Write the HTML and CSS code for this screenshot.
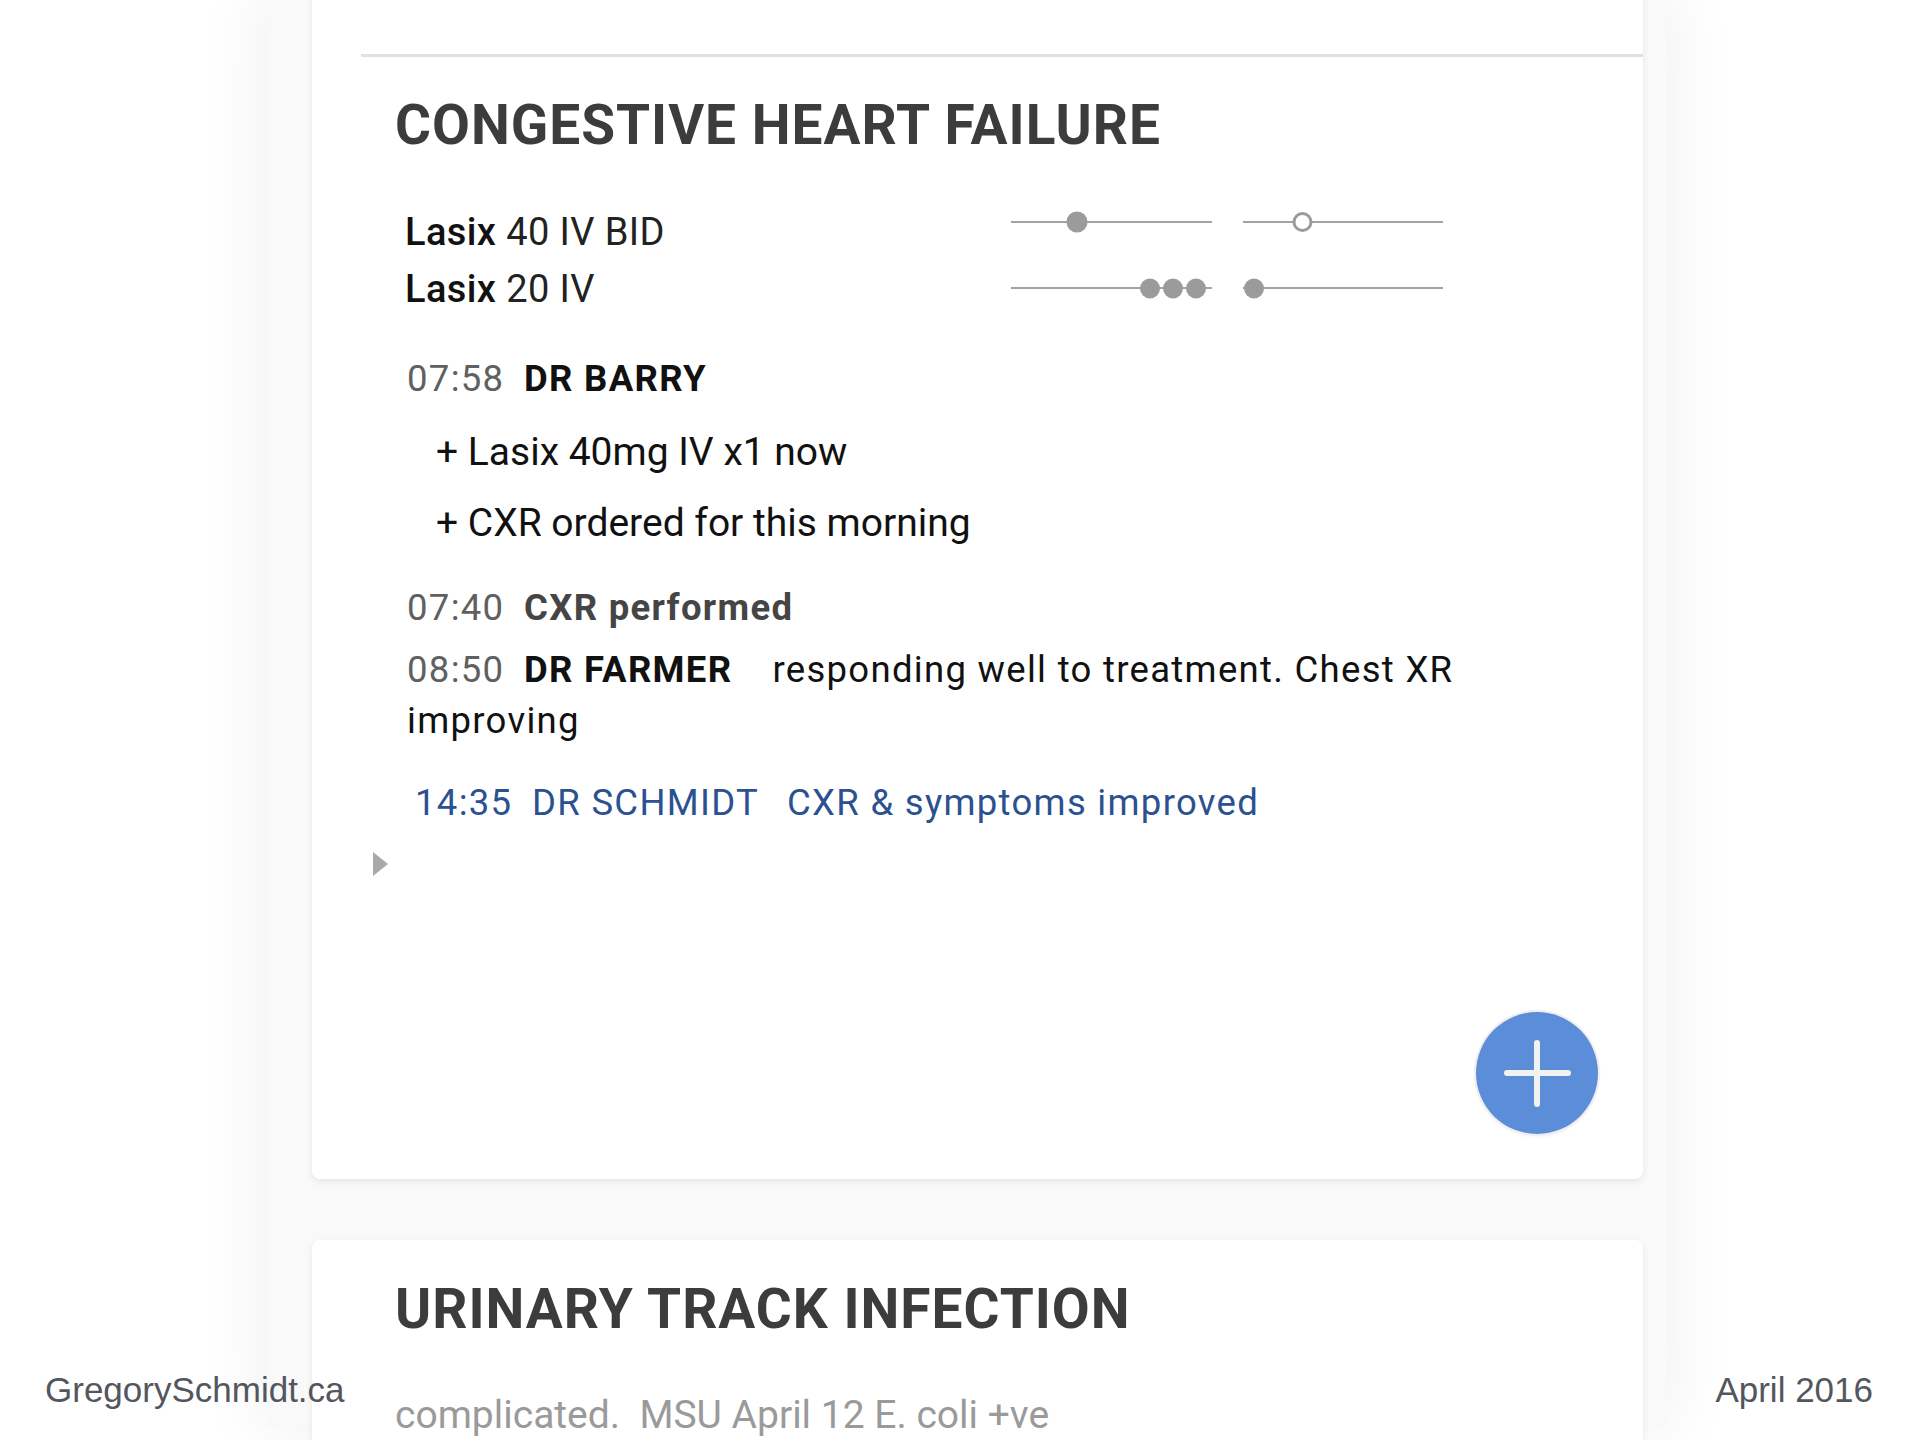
FILE: index.html
```html
<!DOCTYPE html>
<html lang="en">
<head>
    <meta charset="UTF-8">
    <meta name="viewport" content="width=device-width, initial-scale=1.0">
    <title>Problem List</title>
    <link rel="stylesheet" href="styles.css">
</head>
<body>

    <div class="screen">
        <div class="card card-first">
            <div class="prev"></div>
            <div class="divider"></div>

            <h1 class="problem-title">CONGESTIVE HEART FAILURE</h1>

            <div class="meds">
                <div class="med-names">
                    <div class="med"><b>Lasix</b> 40 IV BID</div>
                    <div class="med"><b>Lasix</b> 20 IV</div>
                </div>
                <svg class="med-track" width="432" height="114" viewBox="0 0 432 114">
                    <!-- baris 1 -->
                    <line x1="0" y1="18" x2="201" y2="18" />
                    <line x1="232" y1="18" x2="432" y2="18" />
                    <circle class="dose" cx="66" cy="18" r="10.5" />
                    <circle class="dose-open" cx="291.5" cy="18" r="8.5" />
                    <!-- baris 2 -->
                    <line x1="0" y1="84" x2="201" y2="84" />
                    <line x1="232" y1="84" x2="432" y2="84" />
                    <circle class="dose" cx="139" cy="84.5" r="10" />
                    <circle class="dose" cx="162" cy="84.5" r="10" />
                    <circle class="dose" cx="185" cy="84.5" r="10" />
                    <circle class="dose" cx="243" cy="84.5" r="10" />
                </svg>
            </div>

            <div class="log">
                <div class="entry"><span class="time">07:58</span><span class="who">DR BARRY</span></div>
                <div class="note">+ Lasix 40mg IV x1 now</div>
                <div class="note">+ CXR ordered for this morning</div>

                <div class="entry event"><span class="time">07:40</span><span class="who">CXR performed</span></div>
                <div class="entry follow"><span class="time">08:50</span><span class="who">DR FARMER</span>responding well to treatment. Chest XR improving</div>

                <div class="entry mine"><span class="time">14:35</span><span class="who">DR SCHMIDT</span>CXR &amp; symptoms improved</div>
            </div>

            <div class="toggle"></div>

            <div class="fab-row">
                <button class="fab">
                    <svg width="122" height="122" viewBox="0 0 122 122">
                        <line x1="31" y1="61" x2="92" y2="61" />
                        <line x1="61" y1="31" x2="61" y2="92" />
                    </svg>
                </button>
            </div>
        </div>

        <div class="card">
            <h1 class="problem-title">URINARY TRACK INFECTION</h1>
            <p class="summary">complicated.&nbsp; MSU April 12 E. coli +ve</p>
        </div>
    </div>

    <div class="footer-left">GregorySchmidt.ca</div>
    <div class="footer-right">April 2016</div>

</body>
</html>
```

FILE: styles.css
```css
/* Global */
body {
    margin: 0;
    height: 1440px;
    overflow: hidden;
    background-color: #fff;
    font-family: Roboto, "Noto Sans", sans-serif;
    color: #1a1a1a;
    position: relative;
}

.screen {
    width: 1400px;
    height: 1440px;
    margin-left: 267px;
    padding: 0 24px 0 45px;
    box-sizing: border-box;
    background-color: #f9f9f9;
    box-shadow: 0 0 70px rgba(0, 0, 0, 0.07);
}

.card {
    background-color: #fff;
    border-radius: 8px;
    box-shadow: 0 3px 7px rgba(0, 0, 0, 0.08);
    padding: 37px 45px 45px 81px;
}

.card-first {
    margin-top: -12px;
    padding-top: 0;
    margin-bottom: 61px;
}

.prev {
    height: 66px;
}

.divider {
    border-top: 3px solid #e1e1e1;
    margin: 0 -45px 0 -32px;
}

.problem-title {
    margin: 36px 0 0;
    padding-left: 2px;
    font-size: 55px;
    line-height: 64px;
    font-weight: 700;
    color: #3c3c3c;
    letter-spacing: 1px;
}

.card .problem-title:first-child {
    margin-top: 0;
}

/* Obat */
.meds {
    display: flex;
    margin-top: 47px;
    padding-left: 12px;
}

.med-names {
    width: 606px;
}

.med {
    font-size: 38px;
    line-height: 57px;
    letter-spacing: 0.4px;
    color: #222;
}

.med b {
    font-weight: 500;
    color: #111;
}

.med-track line {
    stroke: #a3a3a3;
    stroke-width: 2;
}

.med-track .dose {
    fill: #9b9b9b;
}

.med-track .dose-open {
    fill: #fff;
    stroke: #9b9b9b;
    stroke-width: 3;
}

/* Catatan */
.log {
    padding: 0 55px 0 14px;
    margin-top: 34.5px;
}

.entry {
    font-size: 36.5px;
    line-height: 51px;
    letter-spacing: 1.3px;
    color: #111;
}

.time {
    display: inline-block;
    width: 117px;
    color: #606060;
}

.who {
    font-weight: 700;
    color: #111;
    margin-right: 40px;
}

.note {
    font-size: 39px;
    line-height: 60px;
    padding-left: 29px;
    margin-top: 11px;
    color: #111;
}

.entry + .note {
    margin-top: 18px;
}

.entry.event {
    margin-top: 29px;
}

.event .who {
    color: #454545;
}

.entry.follow {
    margin-top: 11px;
}

.entry.mine {
    margin-top: 31px;
    padding-left: 8px;
    color: #2b5190;
}

.mine .time,
.mine .who {
    color: #2b5190;
    font-weight: 400;
}

.mine .who {
    margin-right: 28px;
}

.toggle {
    width: 0;
    height: 0;
    margin: 24px 0 0 -20px;
    border-top: 12px solid transparent;
    border-bottom: 12px solid transparent;
    border-left: 15px solid #a9a9a9;
}

.fab-row {
    display: flex;
    justify-content: flex-end;
    margin-top: 136.5px;
}

.fab {
    width: 122px;
    height: 122px;
    padding: 0;
    border: none;
    border-radius: 50%;
    background-color: #5b8dd9;
    box-shadow: 0 0 0 2px #efefef, 0 2px 4px rgba(0, 0, 0, 0.08);
    cursor: pointer;
}

.fab svg {
    display: block;
}

.fab line {
    stroke: #f2f2f2;
    stroke-width: 6;
    stroke-linecap: round;
}

.summary {
    margin: 46px 0 0;
    padding-left: 2px;
    font-size: 39px;
    line-height: 56px;
    color: #9a9a9a;
}

/* Footer */
.footer-left,
.footer-right {
    position: absolute;
    bottom: 33px;
    font-family: "Liberation Sans", Arial, sans-serif;
    font-size: 35px;
    line-height: 35px;
    color: #53575d;
}

.footer-left {
    left: 45px;
}

.footer-right {
    right: 47px;
}
```
